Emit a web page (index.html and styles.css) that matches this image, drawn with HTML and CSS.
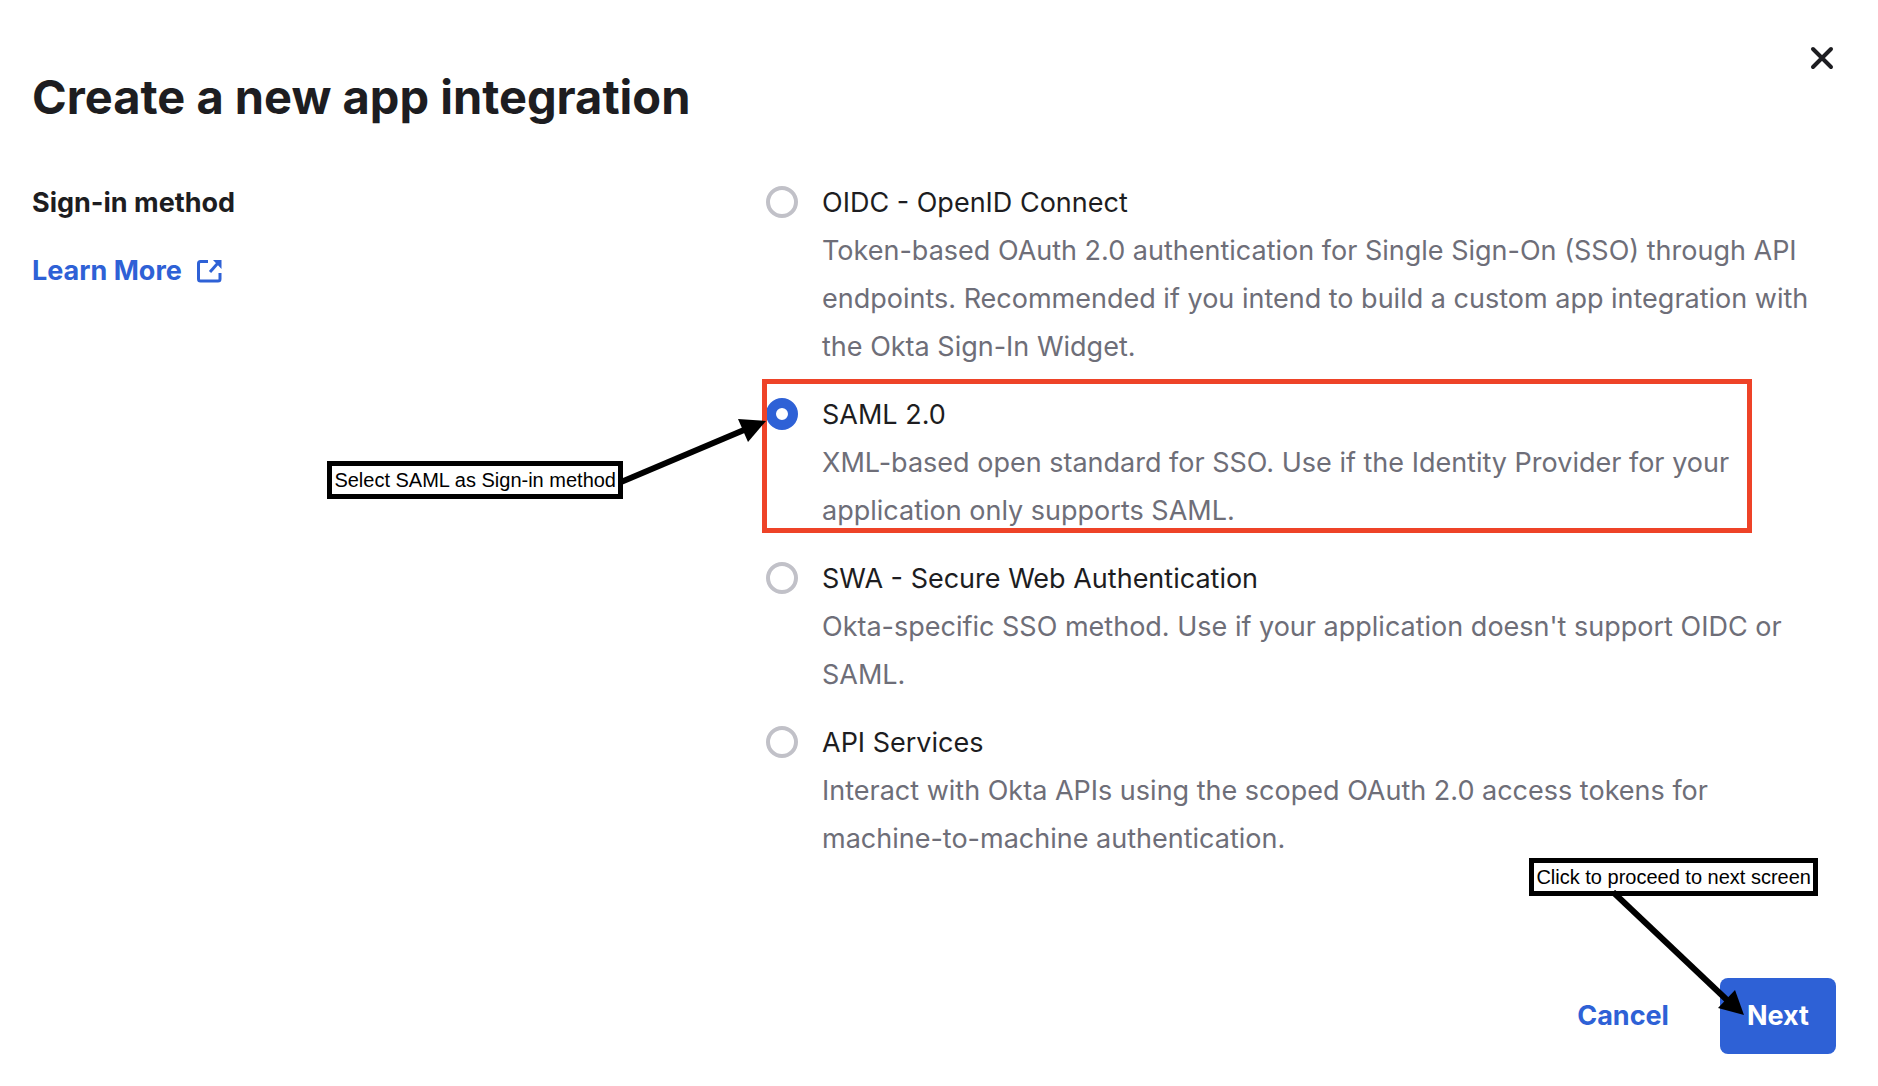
FILE: index.html
```html
<!DOCTYPE html>
<html lang="en">
<head>
<meta charset="utf-8">
<meta name="viewport" content="width=device-width, initial-scale=1">
<title>Create a new app integration</title>
<link rel="stylesheet" href="styles.css">
</head>
<body>
<main class="dialog">
  <header class="dialog-header">
    <h1 class="dialog-title">Create a new app integration</h1>
    <button class="close-button" type="button" aria-label="Close">
      <svg width="24" height="24" viewBox="0 0 24 24" fill="none" stroke="currentColor" stroke-width="4" stroke-linecap="round"><path d="M3 3l18 18M21 3L3 21"/></svg>
    </button>
  </header>

  <form class="dialog-form">
    <div class="method">
      <div class="method-intro">
        <h2 class="method-title" id="method-title">Sign-in method</h2>
        <a class="learn-more" href="#">Learn More
          <svg width="26" height="24" viewBox="0 0 26 24" fill="none" stroke="currentColor" stroke-width="3"><path d="M12 2.5H4.500Q2.500 2.500 2.500 4.500V20Q2.500 22 4.500 22H22Q24 22 24 20V14"/><path d="M14 13L22 4"/><path d="M17 1H25.500V10Z" fill="currentColor" stroke="none"/></svg>
        </a>
      </div>

      <div class="options" role="radiogroup" aria-labelledby="method-title">
        <div class="option">
          <input class="option-radio" type="radio" name="method" id="oidc">
          <div class="option-text">
            <label class="option-label" for="oidc">OIDC - OpenID Connect</label>
            <p class="option-description">Token-based OAuth 2.0 authentication for Single Sign-On (SSO) through API endpoints. Recommended if you intend to build a custom app integration with the Okta Sign-In Widget.</p>
          </div>
        </div>

        <div class="option">
          <input class="option-radio" type="radio" name="method" id="saml" checked>
          <div class="option-text">
            <label class="option-label" for="saml">SAML 2.0</label>
            <p class="option-description">XML-based open standard for SSO. Use if the Identity Provider for your application only supports SAML.</p>
          </div>
          <div class="highlight"></div>
          <div class="note note-saml">Select SAML as Sign-in method</div>
          <svg class="arrow arrow-saml" width="146" height="76" viewBox="0 0 146 76"><path d="M1 72L124 20" stroke="#000" stroke-width="6"/><path d="M146 11L118 9L128 32Z"/></svg>
        </div>

        <div class="option">
          <input class="option-radio" type="radio" name="method" id="swa">
          <div class="option-text">
            <label class="option-label" for="swa">SWA - Secure Web Authentication</label>
            <p class="option-description">Okta-specific SSO method. Use if your application doesn't support OIDC or SAML.</p>
          </div>
        </div>

        <div class="option">
          <input class="option-radio" type="radio" name="method" id="api">
          <div class="option-text">
            <label class="option-label" for="api">API Services</label>
            <p class="option-description">Interact with Okta APIs using the scoped OAuth 2.0 access tokens for machine-to-machine authentication.</p>
          </div>
        </div>
      </div>
    </div>

    <footer class="actions">
      <button class="button button-cancel" type="button">Cancel</button>
      <button class="button button-next" type="button">Next</button>
      <div class="note note-next">Click to proceed to next screen</div>
      <svg class="arrow arrow-next" width="140" height="130" viewBox="0 0 140 130"><path d="M3 2L117 110" stroke="#000" stroke-width="6"/><path d="M134 125L108 118L125 100Z"/></svg>
    </footer>
  </form>
</main>
</body>
</html>
```
FILE: styles.css
```css
* {
  box-sizing: border-box;
}

body {
  margin: 0;
  background: #fff;
  color: #1d1d21;
  font: 400 27px/48px Inter, sans-serif;
}

h1, h2, p {
  margin: 0;
}

button {
  border: 0;
  padding: 0;
  background: none;
  color: inherit;
  font: inherit;
  cursor: pointer;
}

.dialog {
  padding: 42px 42px 32px 32px;
}

.dialog-header {
  display: flex;
  align-items: flex-start;
  justify-content: space-between;
  margin-bottom: 54px;
}

.dialog-title {
  padding-top: 27px;
  font-size: 47px;
  font-weight: 700;
  line-height: 56px;
}

.close-button {
  display: flex;
  align-items: center;
  justify-content: center;
  width: 28px;
  height: 32px;
}

.method {
  display: grid;
  grid-template-columns: 734fr 1070fr;
}

.method-intro {
  display: flex;
  flex-direction: column;
  align-items: flex-start;
  gap: 20px;
}

.method-title {
  font-size: 27px;
  font-weight: 700;
}

.learn-more {
  display: inline-flex;
  align-items: center;
  gap: 14px;
  color: #2e61d6;
  font-weight: 700;
  text-decoration: none;
}

.options {
  display: flex;
  flex-direction: column;
  gap: 20px;
}

.option {
  position: relative;
  display: flex;
  gap: 24px;
}

.option-radio {
  flex: none;
  appearance: none;
  width: 32px;
  height: 32px;
  margin: 7px 0;
  border: 4px solid #c1c1c8;
  border-radius: 50%;
  background: #fff;
}

.option-radio:checked {
  border: 10px solid #2e61d6;
}

.option-label {
  display: block;
}

.option-description {
  color: #6e6e78;
}

.actions {
  position: relative;
  display: flex;
  justify-content: flex-end;
  gap: 24px;
  margin-top: 115px;
}

.button {
  height: 76px;
  padding: 0 27px;
  border-radius: 8px;
  font-weight: 700;
}

.button-cancel {
  color: #2e61d6;
}

.button-next {
  background: #2e61d6;
  color: #fff;
}

/* Walkthrough annotations laid over the dialog */
.highlight {
  position: absolute;
  inset: -12px 84px 2px -4px;
  border: 5px solid #ee4328;
  pointer-events: none;
}

.note {
  position: absolute;
  padding: 0 2px;
  border: 5px solid #000;
  background: #fff;
  color: #000;
  font: 20px/28px "Liberation Sans", sans-serif;
  white-space: nowrap;
}

.note-saml {
  top: 70px;
  right: calc(100% + 143px);
}

.note-next {
  top: -120px;
  right: 18px;
}

.arrow {
  position: absolute;
  pointer-events: none;
}

.arrow-saml {
  top: 19px;
  right: 100%;
}

.arrow-next {
  top: -88px;
  right: 86px;
}
```
